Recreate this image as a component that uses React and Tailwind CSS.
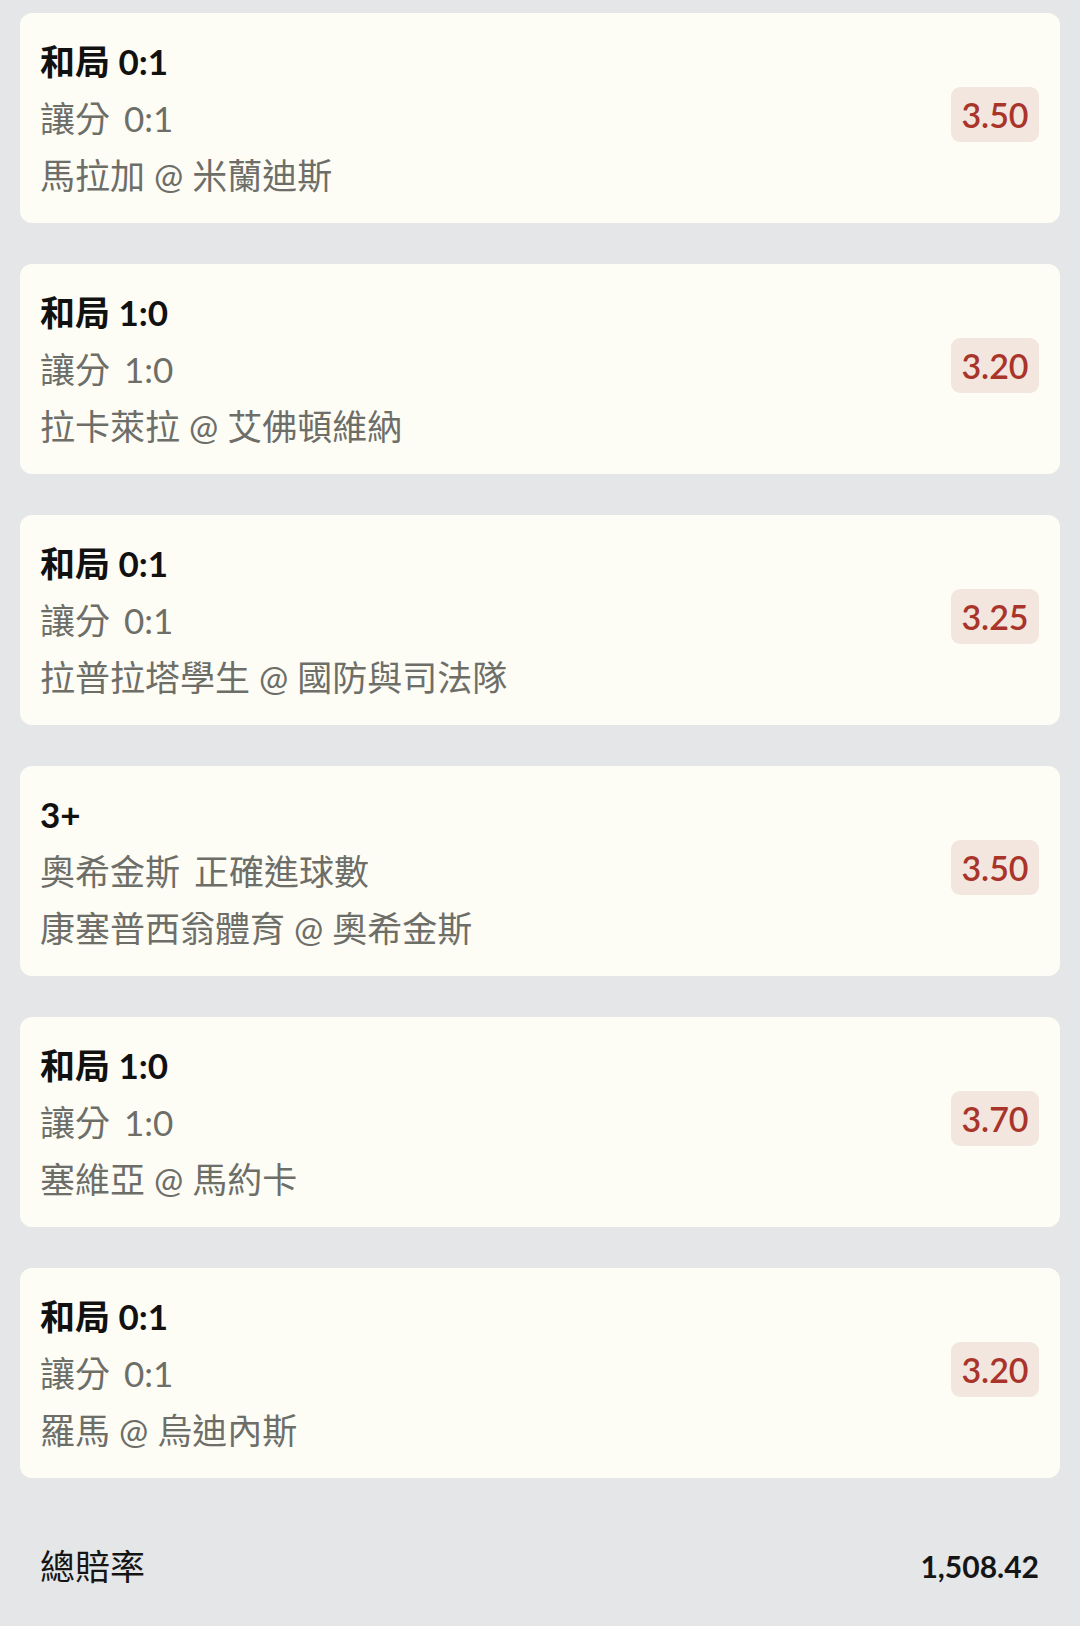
import React from "react";

const bets = [
  { title: "和局 0:1", sub: "讓分 0:1", match: "馬拉加 @ 米蘭迪斯", odds: "3.50" },
  { title: "和局 1:0", sub: "讓分 1:0", match: "拉卡萊拉 @ 艾佛頓維納", odds: "3.20" },
  { title: "和局 0:1", sub: "讓分 0:1", match: "拉普拉塔學生 @ 國防與司法隊", odds: "3.25" },
  { title: "3+", sub: "奧希金斯 正確進球數", match: "康塞普西翁體育 @ 奧希金斯", odds: "3.50" },
  { title: "和局 1:0", sub: "讓分 1:0", match: "塞維亞 @ 馬約卡", odds: "3.70" },
  { title: "和局 0:1", sub: "讓分 0:1", match: "羅馬 @ 烏迪內斯", odds: "3.20" },
];

export default function App() {
  return (
    <div
      className="min-h-[1626px] w-[1080px] bg-[#e5e6e8] px-5 pt-[13px]"
      style={{ fontFamily: 'Lato, "Noto Sans CJK TC", sans-serif' }}
    >
      <div className="flex flex-col gap-[41px]">
        {bets.map((b, i) => (
          <div
            key={i}
            className="flex h-[210px] items-center justify-between rounded-[12px] bg-[#fdfdf6] pl-[20px] pr-[20px]"
          >
            <div className="flex flex-col text-[35px] leading-[57px]">
              <div className="font-bold text-[#111111]">{b.title}</div>
              <div className="text-[#6e6e69] [word-spacing:5px]">{b.sub}</div>
              <div className="text-[#6e6e69]">{b.match}</div>
            </div>
            <div className="mb-[8px] mr-[1px] flex h-[55px] w-[88px] items-center justify-center rounded-[9px] bg-[#f3e6df] text-[34px] font-semibold text-[#a8342a]">
              {b.odds}
            </div>
          </div>
        ))}
      </div>
      <div className="mt-[60px] flex items-center justify-between pl-[20px] pr-[21px] leading-[57px] text-[#151515]">
        <div className="text-[35px]">總賠率</div>
        <div className="text-[30px] font-bold">1,508.42</div>
      </div>
    </div>
  );
}
